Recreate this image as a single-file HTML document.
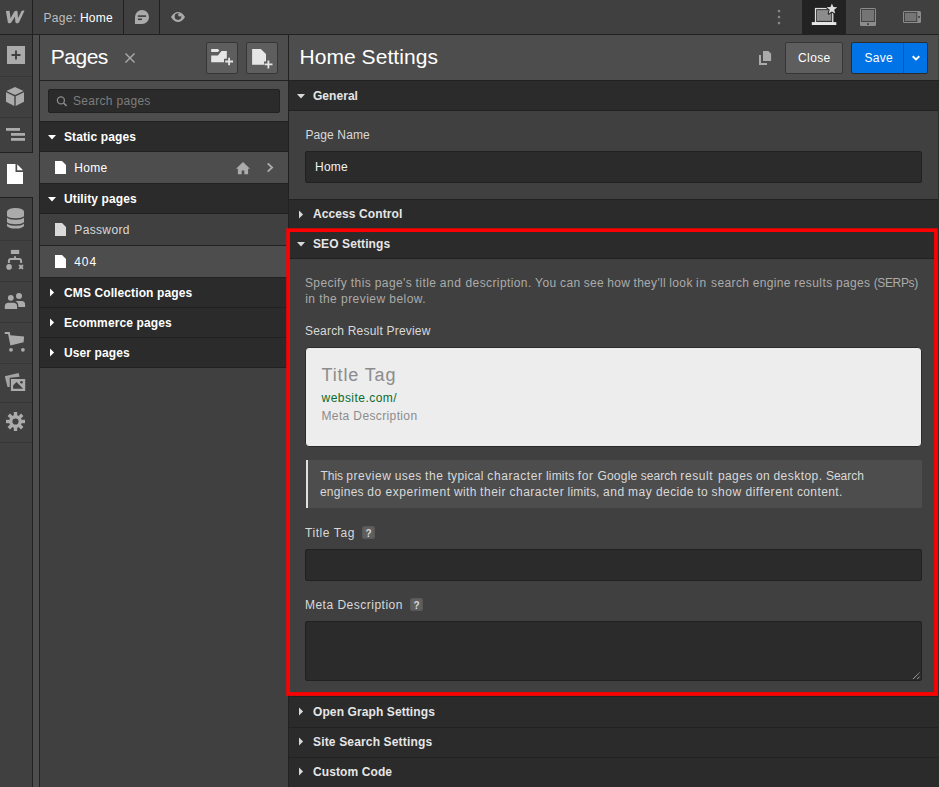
<!DOCTYPE html>
<html lang="en">
<head>
<meta charset="utf-8">
<title>Home Settings</title>
<style>
*{box-sizing:border-box;margin:0;padding:0}
html,body{width:939px;height:787px;overflow:hidden;background:#404040}
body{position:relative;font-family:"Liberation Sans",Arial,sans-serif;font-size:12px;color:#d9d9d9;-webkit-font-smoothing:antialiased}
.abs{position:absolute}
.t{position:absolute;white-space:nowrap;line-height:1}
.ln{width:650px;height:12px;line-height:1;white-space:nowrap}
svg{position:absolute;overflow:visible}
/* top bar */
#topbar{left:0;top:0;width:939px;height:35px;background:#404040;border-bottom:1px solid #212121}
.vline{position:absolute;width:1px;background:#212121}
.hline{position:absolute;height:1px;background:#212121}
/* sidebar */
#sidebar{left:0;top:35px;width:33px;height:752px;background:#404040;border-right:1px solid #212121}
#strip{left:33px;top:35px;width:6px;height:752px;background:#4d4d4d}
.sdiv{position:absolute;left:0;width:32px;height:1px;background:#373737}
/* pages panel */
#pages{left:39px;top:35px;width:249px;height:752px;background:#404040;border-left:1px solid #212121}
.sec{position:absolute;left:0;width:100%;background:#2b2b2b}
.sec .t{font-weight:700;color:#fff}
.row{position:absolute;left:0;width:100%}
.btn{position:absolute;border:1px solid #363636;border-radius:2px;background:#5e5e5e}
.input{position:absolute;background:#2b2b2b;border:1px solid #212121;border-radius:2px}
/* main */
#main{left:288px;top:35px;width:651px;height:752px;background:#404040;border-left:1px solid #212121}
</style>
</head>
<body>

<!-- TOP BAR -->
<div id="topbar" class="abs">
  <div class="vline" style="left:32px;top:0;height:34px"></div>
  <div class="vline" style="left:123px;top:0;height:34px"></div>
  <div class="vline" style="left:159px;top:0;height:34px"></div>
  <!-- W logo -->
  <svg style="left:0;top:0" width="33" height="34" viewBox="0 0 33 34"><path d="M5.900 11 L9.500 10.700 L10.600 18.200 L14 11.900 C15 10.300 17.400 10.300 17.600 12 L18 18.200 L21.400 11.300 C22 10.400 23.300 10.300 24.500 10.800 L19.200 22 C18.400 23.700 15.700 23.700 15.400 22 L14.900 16.800 L11.600 22 C10.700 23.700 8.100 23.700 7.800 22 Z" fill="#ababab"/></svg>
  <div class="t" style="left:43.5px;top:12px;font-size:12px;letter-spacing:.28px;color:#bdbdbd">Page: <span style="color:#fff">Home</span></div>
  <!-- comment icon -->
  <svg style="left:135px;top:10px" width="14" height="14" viewBox="0 0 14 14"><path d="M7 0 A7 7 0 1 1 7 14 L0 14 L0 7 A7 7 0 0 1 7 0 Z" fill="#ababab"/><rect x="2.9" y="5.3" width="8.2" height="1.6" fill="#404040"/><rect x="2.9" y="8.5" width="4.1" height="1.6" fill="#404040"/></svg>
  <!-- eye icon -->
  <svg style="left:171px;top:12px" width="14" height="10" viewBox="0 0 14 10"><path d="M0 5 C2 1.5 4.5 0 7 0 C9.5 0 12 1.5 14 5 C12 8.5 9.5 10 7 10 C4.5 10 2 8.5 0 5 Z" fill="#ababab"/><circle cx="7" cy="4.6" r="3.3" fill="#404040"/><circle cx="8.800" cy="2.900" r="1.700" fill="#ababab"/></svg>
  <!-- dots -->
  <svg style="left:770px;top:0" width="20" height="34" viewBox="0 0 20 34"><g fill="#858585"><circle cx="9" cy="11.100" r="1.300"/><circle cx="9" cy="17.100" r="1.300"/><circle cx="9" cy="23.100" r="1.300"/></g></svg>
  <!-- active device -->
  <div class="abs" style="left:802px;top:0;width:44px;height:34px;background:#222"></div>
  <svg style="left:812px;top:3px" width="26" height="23" viewBox="0 0 26 23">
    <rect x="3.550" y="5.550" width="17.200" height="14" fill="#222" stroke="#e0e0e0" stroke-width="1.300"/>
    <rect x="5" y="7.100" width="14.400" height="10.800" fill="#8c8c8c"/>
    <rect x="-0.200" y="19.100" width="24.500" height="2.900" fill="#e6e6e6"/>
    <path d="M19.9 0.5 L21.4 4.1 L25.3 4.3 L22.2 6.8 L23.2 10.6 L19.9 8.4 L16.7 10.6 L17.7 6.8 L14.6 4.3 L18.5 4.1 Z" fill="#dedede" stroke="#222" stroke-width="2" paint-order="stroke" stroke-linejoin="round"/>
  </svg>
  <!-- tablet -->
  <svg style="left:860px;top:8px" width="16" height="18" viewBox="0 0 16 18"><rect x="0" y="0" width="16" height="18" rx="1.500" fill="#8c8c8c"/><rect x="1" y="1" width="14" height="13" fill="#444"/><rect x="2" y="2" width="12" height="11" fill="#757575"/><rect x="7.100" y="15.200" width="1.800" height="1.800" fill="#404040"/></svg>
  <!-- mobile landscape -->
  <svg style="left:903px;top:11px" width="18" height="12" viewBox="0 0 18 12"><rect x="0" y="0" width="18" height="12" rx="1.500" fill="#8c8c8c"/><rect x="1" y="1" width="13.300" height="10" fill="#444"/><rect x="2" y="2" width="11.300" height="8" fill="#757575"/><rect x="15.200" y="5" width="1.700" height="1.900" fill="#404040"/></svg>
</div>

<!-- SIDEBAR -->
<div id="sidebar" class="abs">
  <div class="sdiv" style="top:40.5px"></div>
  <div class="sdiv" style="top:81.5px"></div>
  <div class="sdiv" style="top:205px"></div>
  <div class="sdiv" style="top:246px"></div>
  <div class="sdiv" style="top:287px"></div>
  <div class="sdiv" style="top:328px"></div>
  <div class="sdiv" style="top:367px"></div>
  <div class="sdiv" style="top:407px"></div>
</div>
<div id="strip" class="abs"></div>
<!-- active item -->
<div class="abs" style="left:0;top:152px;width:33px;height:1px;background:#212121"></div>
<div class="abs" style="left:0;top:153px;width:34px;height:44px;background:#4d4d4d"></div>
<div class="abs" style="left:0;top:197px;width:33px;height:1px;background:#212121"></div>

<!-- sidebar icons -->
<!-- plus -->
<svg style="left:7px;top:46px" width="18" height="18" viewBox="0 0 18 18"><rect width="18" height="18" fill="#ababab"/><path d="M9 4.5V13.5M4.5 9H13.500" stroke="#404040" stroke-width="1.9" fill="none"/></svg>
<!-- cube -->
<svg style="left:6px;top:87px" width="18" height="19" viewBox="0 0 18 19"><path d="M9 0 L17.6 4 L9 8 L0.400 4 Z" fill="#ababab"/><path d="M0 5.2 L8.300 9.200 L8.300 19 L0 14.800 Z" fill="#ababab"/><path d="M18 5.2 L9.700 9.200 L9.700 19 L18 14.800 Z" fill="#ababab"/></svg>
<!-- navigator -->
<svg style="left:6px;top:128px" width="19" height="13" viewBox="0 0 19 13"><rect x="0" y="0" width="14" height="2.800" fill="#ababab"/><rect x="5" y="5" width="14" height="2.800" fill="#ababab"/><rect x="5" y="10" width="14" height="2.800" fill="#ababab"/></svg>
<!-- pages active -->
<svg style="left:7px;top:164px" width="16" height="20" viewBox="0 0 16 20"><path d="M0 0 H8.500 V8 H16 V20 H0 Z" fill="#fff"/><path d="M10.200 0.300 L16 6.300 H10.200 Z" fill="#fff"/></svg>
<!-- cms -->
<svg style="left:6.6px;top:207.7px" width="17" height="21" viewBox="0 0 17 21"><path d="M0 3.5 A8.5 3.5 0 0 1 17 3.5 V8 C15.5 11 1.5 11 0 8 Z" fill="#ababab"/><path d="M0 9.5 C1.5 12.5 15.5 12.5 17 9.5 V14.1 C15.5 17.1 1.5 17.1 0 14.100 Z" fill="#ababab"/><path d="M0 15.6 C1.5 18.600 15.5 18.600 17 15.600 V17.400 C17 21.500 0 21.500 0 17.400 Z" fill="#ababab"/></svg>
<!-- logic -->
<svg style="left:0;top:240px" width="33" height="40" viewBox="0 240 33 40"><rect x="10.900" y="249.900" width="8.300" height="4.100" fill="#ababab"/><path d="M14.950 256.200 V259 M8.900 262.900 V261 Q8.900 259 10.900 259 H19.100 Q21.100 259 21.100 261 V262.900" stroke="#ababab" stroke-width="2" fill="none"/><circle cx="9.050" cy="266.900" r="2.800" fill="#ababab"/><path d="M19.200 265 L23 268.800 M23 265 L19.200 268.800" stroke="#ababab" stroke-width="1.900"/></svg>
<!-- users -->
<svg style="left:0;top:280px" width="33" height="40" viewBox="0 280 33 40"><g fill="#ababab"><circle cx="19" cy="295.900" r="3"/><path d="M15.600 301 H21.500 Q25.100 301 25.100 304.600 V306.900 H18.400 V305.800 Q18.400 302.600 15.600 301 Z"/><circle cx="10.800" cy="297.800" r="2.900"/><path d="M4.800 308.900 V306.400 Q4.800 302.700 8.600 302.700 H13.300 Q17.100 302.700 17.100 306.400 V308.900 Z"/></g></svg>
<!-- cart -->
<svg style="left:0;top:320px" width="33" height="40" viewBox="0 320 33 40"><g fill="#ababab"><path d="M4.800 331.900 H9.800 L10.300 335.300 L24.100 336.500 L23.600 342.300 L10.400 345.500 L8.100 334 H4.800 Z"/><circle cx="11" cy="349.800" r="1.900"/><circle cx="22.900" cy="349.800" r="1.900"/></g></svg>
<!-- assets -->
<svg style="left:0;top:360px" width="33" height="40" viewBox="0 360 33 40"><path d="M4.800 376.200 L18.600 372.900 L19.600 376.800 L9.700 377.800 L9.700 387 L7.500 387 Z" fill="#a3a3a3"/><rect x="10.900" y="379" width="14.300" height="12" fill="#ababab"/><path d="M13.100 388.700 V385.400 L16.500 382.100 L23.100 388.700 Z" fill="#404040"/><circle cx="21.500" cy="382.300" r="1.300" fill="#404040"/></svg>
<!-- gear -->
<svg style="left:6px;top:412px" width="19" height="19" viewBox="-9.500 -9.500 19 19"><g fill="#ababab"><rect x="-1.700" y="-9.500" width="3.400" height="19"/><rect x="-1.700" y="-9.500" width="3.400" height="19" transform="rotate(45)"/><rect x="-1.700" y="-9.500" width="3.400" height="19" transform="rotate(90)"/><rect x="-1.700" y="-9.500" width="3.400" height="19" transform="rotate(135)"/><circle r="6.400"/></g><circle r="3.100" fill="#404040"/></svg>

<!-- PAGES PANEL -->
<div id="pages" class="abs">
  <div class="abs" style="left:0;top:0;width:248px;height:45px;background:#4d4d4d"></div>
  <div class="hline" style="left:0;top:45px;width:248px"></div>
  <div class="t" style="left:10.800px;top:11px;font-size:21px;color:#fff;letter-spacing:-.5px">Pages</div>
  <svg style="left:85px;top:17.500px" width="10" height="10" viewBox="0 0 10 10"><path d="M0.500 0.500 L9.500 9.500 M9.500 0.500 L0.500 9.500" stroke="#ababab" stroke-width="1.400"/></svg>
  <div class="btn" style="left:166px;top:7px;width:32px;height:32px"></div>
  <div class="btn" style="left:206px;top:7px;width:32px;height:32px"></div>
  <!-- folder+ / page+ icons -->
  <svg style="left:160px;top:0" width="88" height="45" viewBox="200 35 88 45"><g fill="#e6e6e6"><path d="M211.200 48.900 H218 L219.300 50.500 L218 52.100 H211.200 Z"/><path d="M211.200 55.400 H217.900 L221.500 51.100 H226.800 V58.800 H224 V62.300 H211.200 Z"/><path d="M252.100 48.900 H260.800 L266 54.100 V61.400 H264 V64.800 H252.100 Z"/></g><path d="M229.100 57.700 V65.300 M225.200 61.500 H233.100 M268.400 60.400 V68.400 M264.500 64.400 H272.500" stroke="#e6e6e6" stroke-width="1.800" fill="none"/></svg>

  <div class="abs" style="left:0;top:46px;width:248px;height:40px;background:#4d4d4d"></div>
  <div class="input" style="left:8px;top:54px;width:232px;height:24px"></div>
  <svg style="left:17px;top:61px" width="11" height="11" viewBox="0 0 11 11"><circle cx="3.900" cy="4.400" r="3.500" fill="none" stroke="#8c8c8c" stroke-width="1.300"/><path d="M6.500 7 L9.600 9.900" stroke="#8c8c8c" stroke-width="1.500"/></svg>
  <div class="t" style="left:33px;top:60px;font-size:12px;color:#7d7d7d;letter-spacing:.3px">Search pages</div>

  <div class="sec" style="top:86px;height:31px"><svg style="left:8px;top:14px" width="8" height="5" viewBox="0 0 8 5"><path d="M0 0 H8 L4 4.500 Z" fill="#fff"/></svg><div class="t" style="left:24px;top:9.500px;letter-spacing:.11px">Static pages</div></div>
  <div class="row" style="top:117px;height:31px;background:#4d4d4d"></div>
  <div class="hline" style="left:0;top:148px;width:248px"></div>
  <div class="sec" style="top:149px;height:30px"><svg style="left:8px;top:13px" width="8" height="5" viewBox="0 0 8 5"><path d="M0 0 H8 L4 4.500 Z" fill="#fff"/></svg><div class="t" style="left:24px;top:8.500px;letter-spacing:.11px">Utility pages</div></div>
  <div class="row" style="top:179px;height:31px;background:#404040"></div>
  <div class="hline" style="left:0;top:210px;width:248px"></div>
  <div class="row" style="top:211px;height:31px;background:#4d4d4d"></div>
  <div class="sec" style="top:242px;height:90px"></div>
  <div class="hline" style="left:0;top:272px;width:248px;background:#212121"></div>
  <div class="hline" style="left:0;top:302px;width:248px;background:#212121"></div>
  <div class="sec" style="top:243px;height:30px;background:none"><svg style="left:10px;top:10px" width="5" height="9" viewBox="0 0 5 9"><path d="M0 0.600 L4.100 4.500 L0 8.400 Z" fill="#fff"/></svg><div class="t" style="left:24px;top:9px;letter-spacing:.11px">CMS Collection pages</div></div>
  <div class="sec" style="top:273px;height:30px;background:none"><svg style="left:10px;top:10px" width="5" height="9" viewBox="0 0 5 9"><path d="M0 0.600 L4.100 4.500 L0 8.400 Z" fill="#fff"/></svg><div class="t" style="left:24px;top:9px;letter-spacing:.11px">Ecommerce pages</div></div>
  <div class="sec" style="top:303px;height:30px;background:none"><svg style="left:10px;top:10px" width="5" height="9" viewBox="0 0 5 9"><path d="M0 0.600 L4.100 4.500 L0 8.400 Z" fill="#fff"/></svg><div class="t" style="left:24px;top:9px;letter-spacing:.11px">User pages</div></div>

  <div class="hline" style="left:0;top:86px;width:248px"></div>
  <div class="hline" style="left:0;top:116px;width:248px"></div>
  <div class="hline" style="left:0;top:178px;width:248px"></div>
  <div class="hline" style="left:0;top:242px;width:248px"></div>
  <div class="hline" style="left:0;top:332px;width:248px"></div>
  <!-- page rows content -->
  <svg style="left:15px;top:126px" width="11" height="13" viewBox="0 0 11 13"><path d="M0 0 H7 L11 4 V13 H0 Z" fill="#fff"/></svg>
  <div class="t" style="left:34.300px;top:126.500px;color:#fff;letter-spacing:.25px">Home</div>
  <svg style="left:196px;top:126.700px" width="14" height="13" viewBox="0 0 14 13"><path d="M7 0 L14 6.700 H12.100 V12.300 H8.300 V8.600 H5.700 V12.300 H1.900 V6.700 H0 Z" fill="#ababab"/></svg>
  <svg style="left:227px;top:128px" width="6" height="9" viewBox="0 0 6 9"><path d="M0.700 0.400 L5.100 4.500 L0.700 8.600" fill="none" stroke="#ababab" stroke-width="1.900"/></svg>

  <svg style="left:15px;top:188px" width="11" height="13" viewBox="0 0 11 13"><path d="M0 0 H7 L11 4 V13 H0 Z" fill="#d9d9d9"/></svg>
  <div class="t" style="left:34.300px;top:188.500px;color:#d9d9d9;letter-spacing:.35px">Password</div>
  <svg style="left:15px;top:220px" width="11" height="13" viewBox="0 0 11 13"><path d="M0 0 H7 L11 4 V13 H0 Z" fill="#fff"/></svg>
  <div class="t" style="left:34.300px;top:220.500px;color:#fff;letter-spacing:.9px">404</div>
</div>

<!-- MAIN PANEL -->
<div id="main" class="abs">
  <div class="abs" style="left:0;top:0;width:650px;height:45px;background:#4d4d4d"></div>
  <div class="hline" style="left:0;top:45px;width:650px"></div>
  <div class="t" style="left:10.400px;top:11px;font-size:21px;color:#fff;letter-spacing:.07px">Home Settings</div>
  <!-- copy icon -->
  <svg style="left:470px;top:16px" width="13" height="15" viewBox="0 0 13 15"><path d="M4 0 H9.400 L12.100 2.700 V10.100 H4 Z" fill="#ababab"/><path d="M1 4.100 V12.900 H8" fill="none" stroke="#ababab" stroke-width="2"/></svg>
  <div class="btn" style="left:496px;top:7px;width:58px;height:32px"></div>
  <div class="t" style="left:509px;top:17px;color:#fff;letter-spacing:.4px">Close</div>
  <div class="btn" style="left:562px;top:7px;width:77px;height:32px;background:#0073e6;border-color:#2b2b2b"></div>
  <div class="vline" style="left:614px;top:8px;height:30px;background:#005bb8"></div>
  <div class="t" style="left:575.500px;top:17px;color:#fff;letter-spacing:.3px">Save</div>
  <svg style="left:622px;top:21px" width="9" height="6" viewBox="0 0 9 6"><path d="M1.700 0.300 L5 3.500 L8.300 0.300" fill="none" stroke="#fff" stroke-width="1.900"/></svg>

  <!-- General -->
  <div class="sec" style="top:46px;height:30px"><svg style="left:8px;top:13px" width="8" height="5" viewBox="0 0 8 5"><path d="M0 0 H8 L4 4.500 Z" fill="#d9d9d9"/></svg><div class="t" style="left:24px;top:9px;letter-spacing:.04px;color:#e6e6e6">General</div></div>
  <div class="t" style="left:16.400px;top:94px;letter-spacing:.12px">Page Name</div>
  <div class="input" style="left:16px;top:116px;width:617px;height:32px"></div>
  <div class="t" style="left:26px;top:126px;color:#f2f2f2;letter-spacing:.25px">Home</div>

  <!-- Access control -->
  <div class="sec" style="top:164px;height:30px"><svg style="left:10px;top:10.500px" width="5" height="9" viewBox="0 0 5 9"><path d="M0 0.600 L4.100 4.500 L0 8.400 Z" fill="#d9d9d9"/></svg><div class="t" style="left:24px;top:9px;letter-spacing:.1px;color:#e6e6e6">Access Control</div></div>
  <!-- SEO -->
  <div class="sec" style="top:194px;height:30px"><svg style="left:8px;top:13px" width="8" height="5" viewBox="0 0 8 5"><path d="M0 0 H8 L4 4.500 Z" fill="#d9d9d9"/></svg><div class="t" style="left:24px;top:9px;letter-spacing:.1px;color:#e6e6e6">SEO Settings</div></div>

  <div class="abs ln" style="left:-0.700px;top:242px;color:#ababab"><span style="position:absolute;left:16.6px;top:0;letter-spacing:0.43px">Specify</span> <span style="position:absolute;left:62.4px;top:0;letter-spacing:0.48px">this</span> <span style="position:absolute;left:86.4px;top:0;letter-spacing:0.42px">page's</span> <span style="position:absolute;left:127.3px;top:0;letter-spacing:0.42px">title</span> <span style="position:absolute;left:151.5px;top:0;letter-spacing:0.6px">and</span> <span style="position:absolute;left:177.2px;top:0;letter-spacing:0.4px">description.</span> <span style="position:absolute;left:246.8px;top:0;letter-spacing:0.45px">You</span> <span style="position:absolute;left:271.8px;top:0;letter-spacing:0.31px">can</span> <span style="position:absolute;left:295.5px;top:0;letter-spacing:0.25px">see</span> <span style="position:absolute;left:319.0px;top:0;letter-spacing:0.26px">how</span> <span style="position:absolute;left:345.2px;top:0;letter-spacing:0.3px">they'll</span> <span style="position:absolute;left:381.0px;top:0;letter-spacing:0.35px">look</span> <span style="position:absolute;left:407.8px;top:0;letter-spacing:0.6px">in</span> <span style="position:absolute;left:422.8px;top:0;letter-spacing:0.36px">search</span> <span style="position:absolute;left:464.4px;top:0;letter-spacing:0.36px">engine</span> <span style="position:absolute;left:506.0px;top:0;letter-spacing:0.42px">results</span> <span style="position:absolute;left:547.7px;top:0;letter-spacing:0.32px">pages</span> <span style="position:absolute;left:585.4px;top:0;letter-spacing:-0.37px">(SERPs)</span></div>
  <div class="t" style="left:16.200px;top:258px;color:#ababab;letter-spacing:.45px">in the preview below.</div>
  <div class="t" style="left:16px;top:290px;letter-spacing:.2px">Search Result Preview</div>

  <div class="abs" style="left:16px;top:312px;width:617px;height:100px;background:#ededed;border:1px solid #2b2b2b;border-radius:4px"></div>
  <div class="t" style="left:32.500px;top:331px;font-size:18px;color:#8c8c8c;letter-spacing:.86px">Title Tag</div>
  <div class="t" style="left:32.500px;top:357px;font-size:12px;color:#0b6b2a;letter-spacing:.46px">website.com/</div>
  <div class="t" style="left:32.500px;top:375px;font-size:12px;color:#8c8c8c;letter-spacing:.37px">Meta Description</div>

  <div class="abs" style="left:17px;top:425px;width:616px;height:48px;background:#4d4d4d;border-left:2px solid #e0e0e0;border-radius:0 2px 2px 0"></div>
  <div class="abs ln" style="left:-0.700px;top:435px;color:#d9d9d9"><span style="position:absolute;left:32.3px;top:0;letter-spacing:-0.09px">This</span> <span style="position:absolute;left:58.0px;top:0;letter-spacing:0.53px">preview</span> <span style="position:absolute;left:106.5px;top:0;letter-spacing:0.36px">uses</span> <span style="position:absolute;left:136.7px;top:0;letter-spacing:0.6px">the</span> <span style="position:absolute;left:159.1px;top:0;letter-spacing:0.35px">typical</span> <span style="position:absolute;left:199.0px;top:0;letter-spacing:0.59px">character</span> <span style="position:absolute;left:257.7px;top:0;letter-spacing:0.16px">limits</span> <span style="position:absolute;left:289.4px;top:0;letter-spacing:0.6px">for</span> <span style="position:absolute;left:309.1px;top:0;letter-spacing:0.22px">Google</span> <span style="position:absolute;left:352.5px;top:0;letter-spacing:0.01px">search</span> <span style="position:absolute;left:392.0px;top:0;letter-spacing:0.6px">result</span> <span style="position:absolute;left:429.6px;top:0;letter-spacing:0.42px">pages</span> <span style="position:absolute;left:467.8px;top:0;letter-spacing:0.27px">on</span> <span style="position:absolute;left:485.1px;top:0;letter-spacing:0.47px">desktop.</span> <span style="position:absolute;left:537.6px;top:0;letter-spacing:0.01px">Search</span></div>
  <div class="abs ln" style="left:-0.700px;top:451px;color:#d9d9d9"><span style="position:absolute;left:31.6px;top:0;letter-spacing:0.28px">engines</span> <span style="position:absolute;left:79.0px;top:0;letter-spacing:0.6px">do</span> <span style="position:absolute;left:97.1px;top:0;letter-spacing:0.59px">experiment</span> <span style="position:absolute;left:165.8px;top:0;letter-spacing:0.31px">with</span> <span style="position:absolute;left:191.8px;top:0;letter-spacing:0.51px">their</span> <span style="position:absolute;left:221.1px;top:0;letter-spacing:0.53px">character</span> <span style="position:absolute;left:279.3px;top:0;letter-spacing:0.19px">limits,</span> <span style="position:absolute;left:314.7px;top:0;letter-spacing:0.52px">and</span> <span style="position:absolute;left:339.7px;top:0;letter-spacing:0.6px">may</span> <span style="position:absolute;left:367.7px;top:0;letter-spacing:0.42px">decide</span> <span style="position:absolute;left:409.0px;top:0;letter-spacing:0.34px">to</span> <span style="position:absolute;left:423.1px;top:0;letter-spacing:0.6px">show</span> <span style="position:absolute;left:457.1px;top:0;letter-spacing:0.55px">different</span> <span style="position:absolute;left:508.6px;top:0;letter-spacing:0.39px">content.</span></div>

  <div class="t" style="left:15.900px;top:492px;letter-spacing:.6px">Title Tag</div>
  <div class="abs" style="left:73px;top:491px;width:13px;height:13px;background:#5e5e5e;border:1px solid #575757;border-radius:2px"></div>
  <div class="t" style="left:76.500px;top:494px;font-size:10px;font-weight:700;color:#d9d9d9">?</div>
  <div class="input" style="left:16px;top:514px;width:617px;height:32px"></div>

  <div class="t" style="left:15.900px;top:564px;letter-spacing:.5px">Meta Description</div>
  <div class="abs" style="left:121px;top:563px;width:13px;height:13px;background:#5e5e5e;border:1px solid #575757;border-radius:2px"></div>
  <div class="t" style="left:124.500px;top:566px;font-size:10px;font-weight:700;color:#d9d9d9">?</div>
  <div class="input" style="left:16px;top:586px;width:617px;height:60px"></div>
  <svg style="left:623px;top:636px" width="9" height="9" viewBox="0 0 9 9"><path d="M1.300 7.800 L7.800 1.300 M5.400 7.800 L7.800 5.400" stroke="#e6e6e6" stroke-width="1" stroke-dasharray="0.9 0.600"/></svg>

  <div class="hline" style="left:0;top:75px;width:650px"></div>
  <div class="hline" style="left:0;top:164px;width:650px"></div>
  <div class="hline" style="left:0;top:194px;width:650px"></div>
  <div class="hline" style="left:0;top:223px;width:650px"></div>
  <!-- lower sections -->
  <div class="sec" style="top:661px;height:91px"></div>
  <div class="hline" style="left:0;top:661px;width:650px"></div>
  <div class="hline" style="left:0;top:692px;width:650px;background:#212121"></div>
  <div class="hline" style="left:0;top:722px;width:650px;background:#212121"></div>
  <div class="sec" style="top:661px;height:31px;background:none"><svg style="left:10px;top:11px" width="5" height="9" viewBox="0 0 5 9"><path d="M0 0.600 L4.100 4.500 L0 8.400 Z" fill="#d9d9d9"/></svg><div class="t" style="left:24px;top:9.500px;letter-spacing:.1px;color:#e6e6e6">Open Graph Settings</div></div>
  <div class="sec" style="top:692px;height:30px;background:none"><svg style="left:10px;top:10px" width="5" height="9" viewBox="0 0 5 9"><path d="M0 0.600 L4.100 4.500 L0 8.400 Z" fill="#d9d9d9"/></svg><div class="t" style="left:24px;top:9px;letter-spacing:.16px;color:#e6e6e6">Site Search Settings</div></div>
  <div class="sec" style="top:722px;height:30px;background:none"><svg style="left:10px;top:10px" width="5" height="9" viewBox="0 0 5 9"><path d="M0 0.600 L4.100 4.500 L0 8.400 Z" fill="#d9d9d9"/></svg><div class="t" style="left:24px;top:9px;letter-spacing:.1px;color:#e6e6e6">Custom Code</div></div>
</div>

<div class="abs" style="left:938px;top:35px;width:1px;height:45px;background:#404040"></div>
<div class="abs" style="left:938px;top:81px;width:1px;height:706px;background:#2b2b2b"></div>
<!-- red highlight -->
<svg style="left:0;top:0" width="939" height="787" viewBox="0 0 939 787"><rect x="288.100" y="230.200" width="647.850" height="463.750" fill="none" stroke="#f00" stroke-width="3.700"/></svg>

</body>
</html>
